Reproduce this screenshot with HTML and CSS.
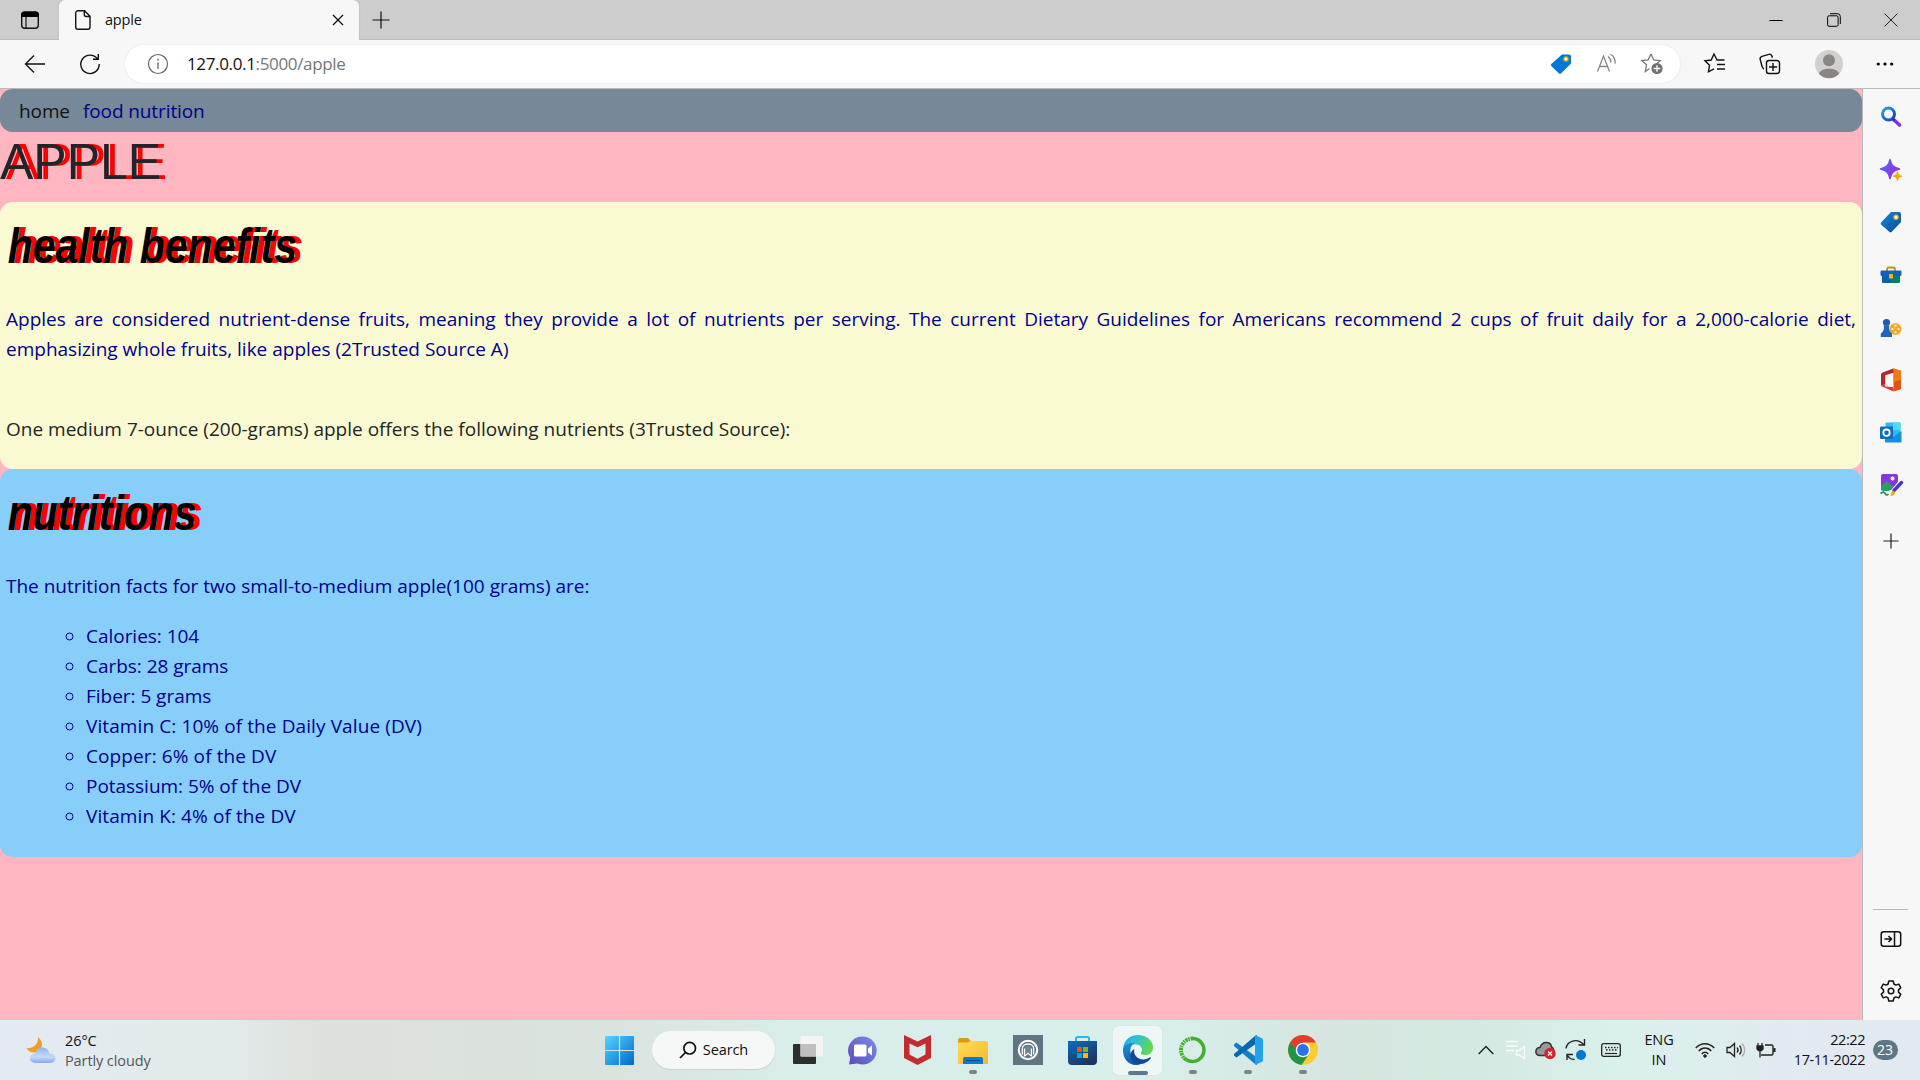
FILE: index.html
```html
<!DOCTYPE html>
<html lang="en">
<head>
<meta charset="utf-8">
<title>apple</title>
<link rel="stylesheet" href="styles.css">
</head>
<body>
<div class="screen">
  <header class="titlebar">
    <div class="tab-actions"><svg width="20" height="20" viewBox="0 0 20 20"><rect x="1.7" y="2.2" width="16.6" height="16" rx="3" fill="none" stroke="#111" stroke-width="1.4"/><path d="M1.2 7V4.5a3 3 0 0 1 3-3h11.6a3 3 0 0 1 3 3V7z" fill="#000"/><path d="M6 7v11" stroke="#111" stroke-width="1.2"/></svg></div>
    <div class="tab">
      <svg width="18" height="22" viewBox="0 0 18 22" fill="none" stroke="#111" stroke-width="1.4"><path d="M4 1.7h6.5l5.5 5.5V18a2.3 2.3 0 0 1-2.3 2.3H4A2.3 2.3 0 0 1 1.7 18V4A2.3 2.3 0 0 1 4 1.7zM10.300 1.700V5.500a2 2 0 0 0 2 2H16"/></svg>
      <span class="tab-title">apple</span>
      <svg class="tab-close" width="12" height="12" viewBox="0 0 12 12"><path d="M1 1l10 10M11 1L1 11" stroke="#111" stroke-width="1.3"/></svg>
    </div>
    <div class="new-tab"><svg width="18" height="18" viewBox="0 0 18 18"><path d="M9 .5v17M.5 9h17" stroke="#111" stroke-width="1.2"/></svg></div>
    <div class="window-buttons">
      <svg width="14" height="14" viewBox="0 0 14 14"><path d="M.5 7.500h13" stroke="#000"/></svg>
      <svg width="14" height="14" viewBox="0 0 14 14" fill="none" stroke="#000"><rect x=".6" y="2.800" width="10.500" height="10.500" rx="1.500"/><path d="M3 .7h7.500a2.800 2.800 0 0 1 2.800 2.800V11"/></svg>
      <svg width="14" height="14" viewBox="0 0 14 14"><path d="M.5.5l13 13M13.500.5l-13 13" stroke="#222"/></svg>
    </div>
  </header>

  <div class="toolbar">
    <div class="nav-button back"><svg width="22" height="20" viewBox="0 0 22 20" fill="none" stroke="#111" stroke-width="1.3"><path d="M21 10H1.500M10 1.500L1.500 10l8.500 8.500"/></svg></div>
    <div class="nav-button"><svg width="22" height="22" viewBox="0 0 22 22" fill="none" stroke="#111" stroke-width="1.400"><path d="M18.500 6A9.200 9.200 0 1 0 20.200 11M19.300 1v5.300H14"/></svg></div>
    <div class="address">
      <svg width="22" height="22" viewBox="0 0 22 22"><circle cx="11" cy="11" r="9.500" fill="none" stroke="#666" stroke-width="1.200"/><path d="M11 9.500V16" stroke="#666" stroke-width="1.300"/><circle cx="11" cy="6.700" r=".9" fill="#666"/></svg>
      <span class="url"><span class="host">127.0.0.1</span>:5000/apple</span>
      <div class="address-icons">
        <svg width="22" height="22" viewBox="0 0 22 22"><path d="M12 1.500h7a2 2 0 0 1 2 2v7L11.500 20a2 2 0 0 1-3 0L1.300 13a1.500 1.500 0 0 1 0-2z" fill="#0078d4"/><circle cx="16" cy="6" r="2.200" fill="#fff" stroke="#e0a400" stroke-width="1.200"/></svg>
        <svg width="22" height="22" viewBox="0 0 22 22" fill="none" stroke="#858585" stroke-width="1.300"><path d="M2.500 18.500L8.500 3l6 15.500M4.500 13.500h8M13 3.500c2.200 1.500 3 3.500 3 6M15.500 1.200c3.500 2 5 5.500 4.500 9.500"/></svg>
        <svg width="24" height="24" viewBox="0 0 24 24"><path d="M11 2l2.700 6 6.500.7-4.800 4.400M9.500 16.500L5.300 19.500l1.200-6.700-4.800-4.300 6.400-.7L11 2" fill="none" stroke="#777" stroke-width="1.300"/><circle cx="17" cy="16.500" r="5.600" fill="#707070"/><path d="M17 13.200v6.600M13.700 16.500h6.600" stroke="#fff" stroke-width="1.300"/></svg>
      </div>
    </div>
    <div class="tools">
      <svg width="22" height="22" viewBox="0 0 22 22" fill="none" stroke="#111" stroke-width="1.400"><path d="M20.500 7H13l-3-6-2.800 6L1 7.800l4.500 4.500-1 6.500 5.500-3M13 11.500h8M13 16h8"/></svg>
      <svg width="22" height="22" viewBox="0 0 22 22" fill="none" stroke="#111" stroke-width="1.400"><rect x="7.500" y="7.500" width="13" height="13" rx="2.500"/><path d="M14 10v8M10 14h8M5 16c-1.500-.6-1.800-2-2.200-3.500L1.200 6.500C.8 5 1.500 3.800 3 3.300L9.800 1.300c1.500-.5 2.700.4 3.200 1.900l.4 1.500"/></svg>
      <svg width="28" height="28" viewBox="0 0 28 28"><circle cx="14" cy="14" r="14" fill="#d2d0ce"/><circle cx="14" cy="10.200" r="6" fill="#8a8583"/><path d="M4 24c1-7 19-7 20 0a14 14 0 0 1-20 0" fill="#8a8583"/></svg>
      <svg width="18" height="4" viewBox="0 0 18 4"><circle cx="2.300" cy="2" r="1.600"/><circle cx="9" cy="2" r="1.600"/><circle cx="15.700" cy="2" r="1.600"/></svg>
    </div>
  </div>

  <div class="middle">
    <main class="page">
      <nav class="site-nav"><a class="home">home</a><a>food nutrition</a></nav>
      <h1>APPLE</h1>
      <section class="card benefits">
        <h2>health benefits</h2>
        <p>Apples are considered nutrient-dense fruits, meaning they provide a lot of nutrients per serving. The current Dietary Guidelines for Americans recommend 2 cups of fruit daily for a 2,000-calorie diet, emphasizing whole fruits, like apples (2Trusted Source A)</p>
        <p class="plain">One medium 7-ounce (200-grams) apple offers the following nutrients (3Trusted Source):</p>
      </section>
      <section class="card facts">
        <h2>nutritions</h2>
        <p>The nutrition facts for two small-to-medium apple(100 grams) are:</p>
        <ul>
          <li>Calories: 104</li>
          <li>Carbs: 28 grams</li>
          <li>Fiber: 5 grams</li>
          <li class="wide">Vitamin C: 10% of the Daily Value (DV)</li>
          <li class="wide">Copper: 6% of the DV</li>
          <li>Potassium: 5% of the DV</li>
          <li class="wide">Vitamin K: 4% of the DV</li>
        </ul>
      </section>
    </main>

    <aside class="sidebar">
      <div class="slot"><svg width="22" height="22" viewBox="0 0 22 22"><defs><linearGradient id="lens" x2="1" y2="1"><stop stop-color="#2aa5dc"/><stop offset="1" stop-color="#0a3fd0"/></linearGradient></defs><path d="M13.500 13.500l6 5.500" stroke="#7a35e8" stroke-width="3.600" stroke-linecap="round"/><path d="M12.500 12.500l2 2" stroke="#333" stroke-width="2"/><circle cx="8.500" cy="8" r="6" fill="none" stroke="url(#lens)" stroke-width="3"/></svg></div>
      <div class="slot"><svg width="22" height="22" viewBox="0 0 22 22"><defs><linearGradient id="spark" x2="1" y2="1"><stop stop-color="#5b6cf5"/><stop offset="1" stop-color="#9b1fe0"/></linearGradient></defs><path d="M10 .5c1.300 6 3 7.700 9.500 9.500-6.500 1.700-8.200 3.500-9.500 9.500C8.700 13.500 7 11.700.5 10 7 8.200 8.700 6.500 10 .5z" fill="url(#spark)" stroke="url(#spark)" stroke-width="1.500" stroke-linejoin="round"/><path d="M17.500 12.500c.8 3 1.500 3.800 4.500 4.700-3 .8-3.700 1.600-4.500 4.600-.8-3-1.500-3.800-4.500-4.600 3-.9 3.700-1.700 4.500-4.700z" fill="#f5a800" stroke="#f5a800" stroke-width=".8" stroke-linejoin="round"/></svg></div>
      <div class="slot"><svg width="22" height="22" viewBox="0 0 22 22"><defs><linearGradient id="tag" x2="1" y2="1"><stop stop-color="#1686d8"/><stop offset="1" stop-color="#0a4a9c"/></linearGradient></defs><path d="M11 1h8a2 2 0 0 1 2 2v8l-9 9.500a2 2 0 0 1-3 0L1.500 14a2 2 0 0 1 0-3z" fill="url(#tag)"/><circle cx="16" cy="6.200" r="2.100" fill="#fff" stroke="#f2b200" stroke-width="1.300"/></svg></div>
      <div class="slot"><svg width="22" height="18" viewBox="0 0 22 18"><path d="M7 5V3.500A2 2 0 0 1 9 1.500h4a2 2 0 0 1 2 2V5" fill="none" stroke="#c58b10" stroke-width="1.800"/><path d="M2 9h18v6.500a1.500 1.500 0 0 1-1.500 1.500h-15A1.500 1.500 0 0 1 2 15.500z" fill="#078060"/><path d="M2 9h9v8H3.500A1.500 1.500 0 0 1 2 15.500z" fill="#0863a4"/><rect x=".5" y="4.500" width="21" height="5.500" rx="1.300" fill="#1260c4"/><rect x="9" y="8" width="4" height="4.500" rx=".6" fill="#f2b71b"/></svg></div>
      <div class="slot"><svg width="22" height="20" viewBox="0 0 22 20"><circle cx="15.500" cy="11" r="6" fill="#f0aa28"/><g fill="#fff4d0"><circle cx="15.500" cy="7.700" r="1.100"/><circle cx="12.500" cy="11" r="1.100"/><circle cx="18.500" cy="11" r="1.100"/><circle cx="15.500" cy="14.300" r="1.100"/></g><circle cx="6.500" cy="4.500" r="3.600" fill="#1d5dae"/><path d="M3.500 7.500h6l-.5 2c.2 3 1 4.500 3 6v3.500H.8v-3.500c2.200-1.500 3-3 3.200-6z" fill="#1c66bd"/></svg></div>
      <div class="slot"><svg width="20" height="24" viewBox="0 0 20 24"><path d="M12.500.5L20 2.800v18.400l-7.500 2.300z" fill="#e8500e"/><path d="M12.500.5L20 2.800V12l-7.500 2z" fill="#f37a12"/><path d="M12.500.5L1.500 4.500 0 6v12l4.200-1.800V7.300l8.300-2.500z" fill="#b8252c"/><path d="M0 18l12.500 5.500v-4.200L4.200 18.500v-2.300z" fill="#d93a3a"/></svg></div>
      <div class="slot"><svg width="22" height="21" viewBox="0 0 22 21"><rect x="5.500" y=".5" width="15" height="15" rx="1" fill="#35b8f1"/><path d="M13 .5h7.500V8H13z" fill="#50d9ff"/><path d="M5 10l8.500 5L21.500 9v10.500a1 1 0 0 1-1 1H6a1 1 0 0 1-1-1z" fill="#1490df"/><rect x="0" y="4.500" width="13" height="12.500" rx="1.200" fill="#0f6cbd"/><circle cx="6.500" cy="10.700" r="3.200" fill="none" stroke="#fff" stroke-width="1.800"/></svg></div>
      <div class="slot"><svg width="24" height="24" viewBox="0 0 24 24"><rect x="2" y="1" width="17" height="16" rx="2" fill="#8a36e0"/><circle cx="13.500" cy="5.500" r="2" fill="#fff"/><path d="M2 13l6-5 6 6-4 4H4a2 2 0 0 1-2-2z" fill="#25a35a"/><path d="M22.500 8.500l-8.500 10" stroke="#fff" stroke-width="5"/><path d="M22.500 9.500l-7.500 8" stroke="#4335cf" stroke-width="3.400" stroke-linecap="round"/><path d="M11 22.500c2.500 1 5.500-.5 5-3.500l-2-1.500c-2 .5-1 3.500-3 5z" fill="#f0a818"/><path d="M1.500 20.500c3-2.500 4-1 5 .5s2 1 3 0" fill="none" stroke="#1c8d52" stroke-width="1.700"/></svg></div>
      <div class="slot add"><svg width="16" height="16" viewBox="0 0 16 16"><path d="M8 .5v15M.5 8h15" stroke="#222" stroke-width="1.200"/></svg></div>
      <div class="sidebar-end">
        <svg width="22" height="18" viewBox="0 0 22 18" fill="none" stroke="#111" stroke-width="1.500"><rect x="1.200" y="1.700" width="19.500" height="14.500" rx="2.500"/><path d="M14.500 2v14M4.500 9h7M8.500 6l3 3-3 3"/></svg>
        <svg width="22" height="22" viewBox="0 0 22 22" fill="none" stroke="#111" stroke-width="1.500" stroke-linejoin="round"><path d="M8.800 1h4.400l.7 3 1.900 1.100 3-1 2 3.700-2.300 2.100v2.200l2.300 2.100-2 3.700-3-1-1.900 1.100-.7 3H8.800l-.7-3-1.900-1.100-3 1-2-3.700 2.300-2.100V9.900L1.200 7.800l2-3.700 3 1L8.100 4z"/><circle cx="11" cy="11" r="2.800"/></svg>
      </div>
    </aside>
  </div>

  <footer class="taskbar">
    <div class="weather">
      <svg width="30" height="28" viewBox="0 0 30 28"><defs><linearGradient id="cloud" x2="0" y2="1"><stop stop-color="#8fb2ef"/><stop offset=".6" stop-color="#c5dafa"/><stop offset="1" stop-color="#86a9ea"/></linearGradient></defs><path d="M12 1c6 5 5.500 14-3 15.500-4 .5-7-1.500-8.500-4.500C7 13 13 8 12 1z" fill="#f29b25"/><path d="M9.500 27C2 27 2 18 9.500 17.500c1.500-8 12-8 14 0C31.500 17 31.500 27 24 27z" fill="url(#cloud)"/></svg>
      <div class="weather-text"><div>26°C</div><div class="muted">Partly cloudy</div></div>
    </div>
    <div class="apps">
      <div class="app"><svg width="29" height="29" viewBox="0 0 29 29"><defs><linearGradient id="win" gradientUnits="userSpaceOnUse" x1="0" y1="0" x2="29" y2="29"><stop stop-color="#55d5ff"/><stop offset="1" stop-color="#0068cc"/></linearGradient></defs><path d="M0 1a1 1 0 0 1 1-1h12.900v13.900H0zM15.100 0H28a1 1 0 0 1 1 1v12.900H15.100zM0 15.100h13.900V29H1a1 1 0 0 1-1-1zM15.100 15.100H29V28a1 1 0 0 1-1 1H15.100z" fill="url(#win)"/></svg></div>
      <div class="search"><svg width="18" height="18" viewBox="0 0 18 18" fill="none" stroke="#111" stroke-width="1.700"><circle cx="10.700" cy="7.200" r="5.800"/><path d="M6.500 11.500L1 17"/></svg><span>Search</span></div>
      <div class="app"><svg width="30" height="28" viewBox="0 0 30 28"><rect y="8" width="23" height="20" rx="1" fill="#2d2d2d"/><rect x="7.500" width="22.500" height="20.500" rx="1" fill="#f4f4f4"/><path d="M7.500 8H23v12.500H7.500z" fill="#bfbfbf"/></svg></div>
      <div class="app"><svg width="29" height="29" viewBox="0 0 29 29"><defs><linearGradient id="chat" x1="1" x2="0" y2="1"><stop stop-color="#7c8de8"/><stop offset="1" stop-color="#5c4bbd"/></linearGradient></defs><path d="M14.500.5a14 14 0 1 1-5 27L1 28.500l1.200-6.700A14 14 0 0 1 14.500.5z" fill="url(#chat)"/><rect x="6" y="8.500" width="12.500" height="12" rx="1.500" fill="#fff"/><path d="M20 12.500l4-3v10l-4-3z" fill="#fff"/></svg></div>
      <div class="app"><svg width="27" height="30" viewBox="0 0 27 30"><path d="M0 0l13.500 6.500L27 0v23l-13.500 7L0 23zM5.500 8.500V19.500l8 4.300 8-4.300V8.500l-8 3.800z" fill="#c42b2f"/></svg></div>
      <div class="app running"><svg width="30" height="27" viewBox="0 0 30 27"><defs><linearGradient id="folder" x2="1" y2="1"><stop stop-color="#ffda5c"/><stop offset="1" stop-color="#f5ba2a"/></linearGradient></defs><path d="M0 3a2 2 0 0 1 2-2h8l3 3v5H0z" fill="#dd9b0b"/><path d="M0 5.500h9.500L12.500 4H28a2 2 0 0 1 2 2v21H0z" fill="url(#folder)"/><path d="M5 27v-5a2 2 0 0 1 2-2h16a2 2 0 0 1 2 2v5z" fill="#0f78cf"/><path d="M8 23.500h14" stroke="#084a93"/></svg></div>
      <div class="app"><svg width="30" height="30" viewBox="0 0 30 30"><rect width="30" height="30" fill="#5f7583"/><circle cx="15" cy="15" r="9.200" fill="none" stroke="#fff" stroke-width="2"/><path d="M9.300 19.500V13.500c0-3 3-4.500 5.700-4.500s5.700 1.500 5.700 4.500v6" fill="none" stroke="#fff" stroke-width="1.300"/><path d="M11.500 20.500V13c0-3.500 7-3.500 7 0v7.500L15 18z" fill="#71838f"/><path d="M11.500 21.500V13.500M18.500 21.500V13.500M11.500 21l3.500-2.500 3.500 2.500" fill="none" stroke="#fff" stroke-width="1.300"/></svg></div>
      <div class="app"><svg width="29" height="29" viewBox="0 0 29 29"><defs><linearGradient id="store" x2=".6" y2="1"><stop stop-color="#0a6cc5"/><stop offset="1" stop-color="#1d3560"/></linearGradient></defs><path d="M8 6V2.500A1.500 1.500 0 0 1 9.500 1h10A1.500 1.500 0 0 1 21 2.500V6" fill="none" stroke="#28b8f0" stroke-width="2"/><path d="M0 5h29v20a4 4 0 0 1-4 4H4a4 4 0 0 1-4-4z" fill="url(#store)"/><path d="M9 11h5v5H9z" fill="#f25022"/><path d="M15 11h5v5h-5z" fill="#7fba00"/><path d="M9 17h5v5H9z" fill="#00a4ef"/><path d="M15 17h5v5h-5z" fill="#ffb900"/></svg></div>
      <div class="app running active"><svg width="30" height="30" viewBox="0 0 30 30"><defs><linearGradient id="e1" x2="1" y2=".3"><stop stop-color="#2aa8e8"/><stop offset=".5" stop-color="#33c3d0"/><stop offset="1" stop-color="#62d84e"/></linearGradient><linearGradient id="e2" x2=".4" y2="1"><stop stop-color="#1c95e0"/><stop offset="1" stop-color="#0c59a4"/></linearGradient></defs><path d="M0 13.500C1 5 7 0 15 0c9 0 15 6 15 12.500 0 5-3.500 7.500-7.500 7.500-4 0-5-1.500-4.500-2.500 2.500-3 0-8-5-8C7 8.500 1 9.500 0 13.500z" fill="url(#e1)"/><path d="M0 14C1 8.500 7 7.500 11.500 8.500 8 10 7 13.500 7.500 17c.7 6 6 10 10.500 11.500-3 2-7 2-10.500.3C2.500 26.500-.5 20 0 14z" fill="url(#e2)"/><path d="M11.500 14c-2 5 3 11 9.500 10.500 3-.2 5-1.500 6.500-2.200.5 0 .7.400.4.800-4 6-12 8-17 4.400C6 24 6.500 16 11.500 14z" fill="#0c4b93"/></svg></div>
      <div class="app running"><svg width="28" height="28" viewBox="0 0 28 28" fill="none" stroke="#43b02a"><path d="M14 2.500A11.500 11.500 0 1 1 7 23.500" stroke-width="3.500"/><path d="M14 2.500A11.500 11.500 0 0 0 7 23.500" stroke-width="3.800" stroke-dasharray="2.500 .8 1.500 .6"/></svg></div>
      <div class="app running"><svg width="30" height="30" viewBox="0 0 30 30"><path d="M1 9.500L3.500 7.500 24 22.500V30L22 29 1 11z" fill="#0f7fc8"/><path d="M1 20.500l2.500 2L24 8V0l-2 1L1 19z" fill="#0567ad"/><path d="M22 0l6.500 3a2 2 0 0 1 1.500 2v20a2 2 0 0 1-1.500 2L22 30z" fill="#23a0ee"/></svg></div>
      <div class="app running"><svg width="30" height="30" viewBox="0 0 30 30"><circle cx="15" cy="15" r="15" fill="#ffcb2e"/><path d="M15 15L2 7.500a15 15 0 0 0 11.500 22.400L21.500 18.500z" fill="#209545"/><path d="M15 15H8.500L2 7.500a15 15 0 0 1 26 0H15z" fill="#e33b2e"/><circle cx="15" cy="15" r="7.300" fill="#fff"/><circle cx="15" cy="15" r="5.900" fill="#2b72e8"/></svg></div>
    </div>
    <div class="tray">
      <svg width="16" height="10" viewBox="0 0 16 10" fill="none" stroke="#222" stroke-width="1.400"><path d="M.7 9L8 1.500 15.300 9"/></svg>
      <svg width="20" height="20" viewBox="0 0 20 20" fill="none" stroke="#fff" stroke-width="1.300" opacity=".85"><path d="M0 1.500h12M0 6h12M0 10.500h8M10.500 10.500h3L18.500 6v13l-5-4h-3z"/></svg>
      <svg width="22" height="20" viewBox="0 0 22 20"><path d="M5 15.500C-1 15.500 0 7.500 5 7.500 7 .5 16 1 16.500 7c3 1.500 3 8-1 8.500z" fill="#999" stroke="#333" stroke-width="1.500"/><circle cx="15" cy="13.500" r="5.700" fill="#d9212c"/><path d="M13 11.500l4 4M17 11.500l-4 4" stroke="#fff" stroke-width="1.300"/></svg>
      <svg width="22" height="22" viewBox="0 0 22 22"><path d="M1 9.500C2 2 12 -1.500 18.500 5.500M19.500 0v6h-6M2 21v-5.500h6M2.500 16.500c1.500 2.500 4 4 7 4" fill="none" stroke="#222" stroke-width="1.400"/><circle cx="16" cy="16" r="5" fill="#0078d4"/></svg>
      <svg width="20" height="14" viewBox="0 0 20 14"><rect x=".7" y=".7" width="18.600" height="12.600" rx="2" fill="none" stroke="#222" stroke-width="1.300"/><path d="M4 4.500h13M5 7h11" stroke="#222" stroke-width="1.500" stroke-dasharray="1.500 1.500"/><path d="M4 10.500h12" stroke="#222" stroke-width="1.200"/></svg>
      <div class="lang"><div>ENG</div><div>IN</div></div>
      <svg width="20" height="16" viewBox="0 0 20 16" fill="none" stroke="#222" stroke-width="1.500"><path d="M.8 6C6 .2 14 .2 19.200 6M3.800 9c3.500-4 8.900-4 12.400 0M6.700 12c2-2.200 4.600-2.200 6.600 0"/><circle cx="10" cy="14" r="1.300" fill="#222" stroke-width="1"/></svg>
      <svg width="20" height="16" viewBox="0 0 20 16" fill="none" stroke="#222" stroke-width="1.300"><path d="M1 5.500h3L8.500 1.500v13L4 10.500H1zM11 5.500c1.300 1.500 1.300 3.500 0 5M13.500 3.500c2.300 2.500 2.300 6.500 0 9"/><path d="M16 1.500c3.500 3.500 3.500 9.500 0 13" stroke="#aaa"/></svg>
      <svg width="20" height="16" viewBox="0 0 20 16"><path d="M1 4h6v3L5.500 8.500h-3L1 7zM2 1v3M6 1v3M4 8v7.500" fill="#222" stroke="#222" stroke-width="1.300"/><path d="M9 3h6.500A1.500 1.500 0 0 1 17 4.500v7a1.500 1.500 0 0 1-1.500 1.500H5" fill="none" stroke="#222" stroke-width="1.400"/><path d="M17.500 6H19.500v4h-2z" fill="#222"/></svg>
      <div class="clock"><div>22:22</div><div>17-11-2022</div></div>
      <div class="badge">23</div>
    </div>
  </footer>
</div>
</body>
</html>
```
FILE: styles.css
```css
* { box-sizing: border-box; }
body {
  margin: 0;
  font-family: "Open Sans", "Noto Sans", sans-serif;
  color: #111;
}
svg { display: block; flex: none; overflow: visible; }
.screen {
  width: 1920px;
  height: 1080px;
  display: flex;
  flex-direction: column;
  overflow: hidden;
  background: #f7f7f7;
}

/* Browser window */
.titlebar {
  height: 40px;
  flex: none;
  display: flex;
  background: #cdcdcd;
  box-shadow: inset 0 -1px #bdbdbd;
}
.tab-actions { width: 59px; display: flex; align-items: center; padding-left: 20px; }
.tab {
  width: 300px;
  display: flex;
  align-items: center;
  padding: 0 15px 0 15px;
  background: #f7f7f7;
  border-radius: 6px 6px 0 0;
  box-shadow: 0 0 2px #aaa;
}
.tab-title { margin: -1px 0 0 13px; font-size: 14.5px; letter-spacing: -.2px; }
.tab-close { margin-left: auto; }
.new-tab { width: 43px; display: grid; place-items: center; }
.window-buttons { margin-left: auto; padding-right: 22px; display: flex; align-items: center; gap: 43.500px; }

.toolbar {
  height: 49px;
  flex: none;
  display: flex;
  align-items: center;
  border-bottom: 1px solid #b9b9b9;
  padding-bottom: 1px;
  background: #f7f7f7;
}
.nav-button { width: 55px; display: grid; place-items: center; }
.back { width: 70px; }
.nav-button + .nav-button { width: 40px; }
.address {
  width: 1555px;
  height: 38px;
  margin-left: 15px;
  padding: 0 16px 0 22px;
  display: flex;
  align-items: center;
  border-radius: 19px;
  background: #fff;
  box-shadow: 0 0 3px #e3e3e3;
}
.url { margin-left: 18px; font-size: 17px; letter-spacing: -.35px; color: #767676; }
.host { color: #111; }
.address-icons { margin-left: auto; display: flex; align-items: center; gap: 23px; }
.tools { width: 240px; padding: 0 26px 0 24px; display: flex; align-items: center; justify-content: space-between; }

.middle { flex: 1; min-height: 0; display: flex; }

/* Web page */
.page {
  width: 1863px;
  border-right: 1px solid #b9b9b9;
  background: lightpink;
  font-size: 19px;
  line-height: 30px;
  color: #212529;
}
.site-nav {
  height: 43px;
  display: flex;
  gap: 13px;
  padding: 7px 19px;
  border-radius: 12.500px;
  background: lightslategray;
  color: darkblue;
  letter-spacing: -.1px;
}
.home { color: #111; }
h1 {
  margin: 0;
  height: 70px;
  font: 400 50px/60px "Liberation Sans", Arial, sans-serif;
  text-shadow: 6px 0 red;
}
.card { padding: 14px 6px 0; border-radius: 12.500px; color: darkblue; }
.benefits { height: 267px; background: lightgoldenrodyellow; }
.facts { height: 388px; background: lightskyblue; }
h2 {
  margin: 0;
  width: max-content;
  padding-left: 2px;
  font: italic 700 50px/60px "Liberation Sans", Arial, sans-serif;
  color: #000;
  text-shadow: 7.300px 0 red;
  transform: scaleX(.82);
  transform-origin: 0 0;
}
p { margin: 28px 0 0; text-align: justify; }
.plain { margin-top: 50px; color: #212529; }
ul { margin: 20px 0 0; padding-left: 80px; list-style: circle; letter-spacing: -.03px; }
.wide { letter-spacing: .1px; }

.sidebar { flex: 1; display: flex; flex-direction: column; align-items: center; padding: 2px 2px 0 0; }
.slot { height: 52.600px; display: grid; place-items: center; }
.slot.add { height: 58px; }
.sidebar-end {
  margin-top: auto;
  width: 35px;
  height: 111px;
  padding-top: 20px;
  border-top: 1px solid #b9b9b9;
  display: flex;
  flex-direction: column;
  align-items: center;
  gap: 32px;
}

/* Desktop taskbar */
.taskbar {
  height: 60px;
  flex: none;
  display: flex;
  align-items: center;
  font-size: 14.500px;
  line-height: 20px;
  letter-spacing: -.1px;
  background: linear-gradient(90deg, #e2ebf1, #e2eaeb 220px, #dde1db 330px, #dae3de 600px, #d8edea 800px, #d8efec 1150px, #d6e5df 1330px, #d3e8e0 1460px, #daf0ec 1620px, #e2eaf0 1820px, #e2e8f0);
}
.weather { width: 592px; display: flex; align-items: center; padding-left: 26px; gap: 9px; }
.weather-text { padding-top: 1px; }
.muted { color: #555; }
.apps { width: 879px; display: flex; align-items: center; }
.app { width: 55px; height: 60px; display: grid; place-items: center; position: relative; }
.search {
  width: 123px;
  height: 38px;
  margin: 0 5px;
  display: flex;
  align-items: center;
  justify-content: center;
  gap: 6px;
  border-radius: 19px;
  background: #f5f8f7;
  box-shadow: 0 1px 1px #c8d2cf;
}
.running::after {
  content: "";
  position: absolute;
  bottom: 6px;
  left: 50%;
  width: 8px;
  height: 4px;
  margin-left: -4px;
  border-radius: 2px;
  background: #7c8582;
}
.active { width: 49px; height: 49px; margin: 0 3px; border-radius: 5px; background: #eef7f6; box-shadow: 0 0 1px #bbc8c5; }
.active::after { bottom: 0; width: 20px; margin-left: -10px; background: #617888; }
.tray {
  display: grid;
  grid-template-columns: 30px 30px 30px 30px 40px 56px 36px 26px 34px 82px 40px;
  place-items: center;
}
.lang { text-align: center; }
.clock { justify-self: end; text-align: right; letter-spacing: -.450px; }
.badge {
  width: 25px;
  height: 20px;
  border-radius: 10px;
  background: #5d7786;
  color: #fff;
  text-align: center;
  font-size: 14px;
}
```
